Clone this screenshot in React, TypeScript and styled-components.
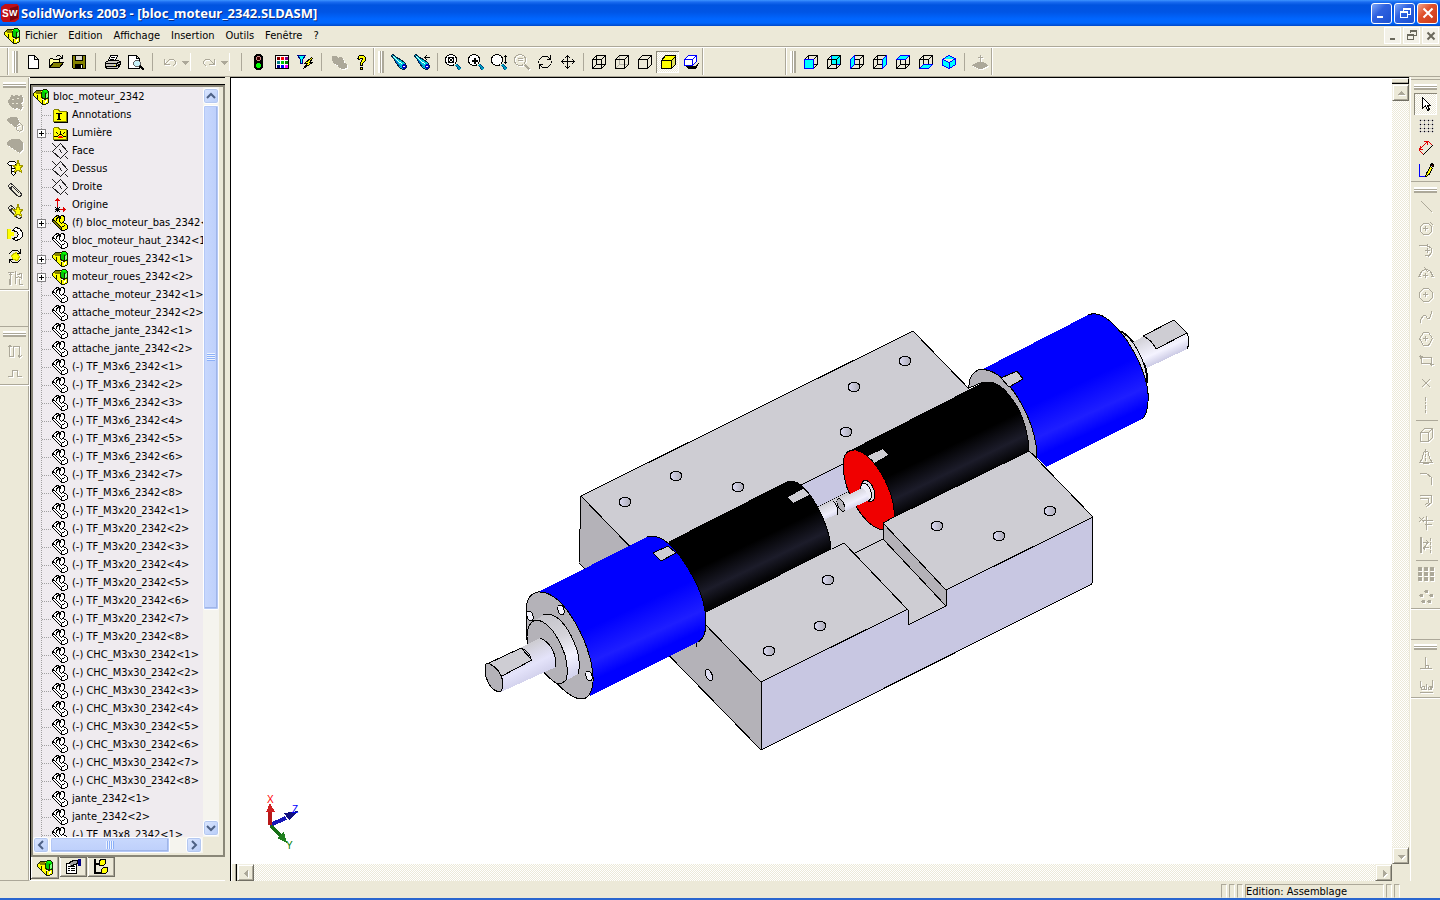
import React from 'react';
import styled, { createGlobalStyle, css } from 'styled-components';

const FACE = '#ece9d8';
const SHADOW = '#aca899';
const UI_FONT = '"DejaVu Sans Condensed", "DejaVu Sans", sans-serif';

const GlobalStyle = createGlobalStyle`
  * { box-sizing: border-box; }
  body { margin: 0; background: ${FACE}; font: 11px/14px ${UI_FONT}; color: #000; }
  button { font: inherit; color: inherit; border: 0; padding: 0; margin: 0; background: none; }
  ul { list-style: none; margin: 0; padding: 0; }
`;

const dither = (a: string, b: string) =>
  `repeating-conic-gradient(${a} 0 25%, ${b} 0 50%) 0 0 / 2px 2px`;

/* ---------- frame ---------- */

const Shell = styled.div`
  display: flex;
  flex-direction: column;
  height: 100vh;
  overflow: hidden;
  border-bottom: 2px solid #2a66cf;
`;

const TitleBar = styled.header`
  display: flex;
  align-items: center;
  flex: none;
  height: 26px;
  padding: 0 2px 0 1px;
  background: linear-gradient(#3d95ff 0, #1a6cf0 2px, #0054e0 5px, #0055e5 12px, #0066ff 19px, #0066fc 23px, #0048c8 26px);
`;

const Title = styled.h1`
  flex: 1;
  margin: 0 0 0 2px;
  font: bold 13px/18px "Noto Sans", "Open Sans", sans-serif;
  color: #fff;
  text-shadow: 1px 1px 0 #0a2a80;
  white-space: nowrap;
`;

const WindowButtons = styled.div`
  display: flex;
  gap: 2px;
`;

const WindowButton = styled.button<{ $close?: boolean }>`
  display: grid;
  place-items: center;
  width: 21px;
  height: 21px;
  border: 1px solid #fff;
  border-radius: 3px;
  background: ${p => p.$close
    ? 'linear-gradient(135deg, #f0a48c, #e0512b 40%, #c8381a)'
    : 'linear-gradient(135deg, #7fa8f8, #2f62e0 40%, #1b50d0)'};
`;

const MenuBar = styled.nav`
  display: flex;
  align-items: center;
  flex: none;
  height: 22px;
  padding: 0 1px 2px 4px;
  border-bottom: 1px solid #fff;
  box-shadow: inset 0 -1px 0 ${SHADOW};
`;

const MenuItems = styled.div`
  display: flex;
  flex: 1;
  gap: 11px;
  padding-left: 5px;
`;

const MdiButtons = styled.div`
  display: flex;
  gap: 2px;
`;

const MdiButton = styled.button`
  display: grid;
  place-items: center;
  width: 17px;
  height: 17px;
  border: 1px solid #fff;
  background: #f3f1e8;
`;

/* ---------- toolbars ---------- */

const TopBar = styled.div`
  display: flex;
  flex: none;
  height: 29px;
  padding: 0 0 1px 7px;
  border-bottom: 1px solid ${SHADOW};
`;

const Band = styled.div`
  display: flex;
  align-items: center;
  height: 27px;
  padding-left: 4px;
  border-left: 1px solid ${SHADOW};
  box-shadow: inset 1px 0 0 #fff;
`;

const BandGap = styled.div<{ $grow?: boolean }>`
  width: 83px;
  flex: ${p => (p.$grow ? '1' : 'none')};
  border-left: 1px solid ${SHADOW};
  box-shadow: inset 1px 0 0 #fff;
`;

const Grip = styled.div<{ $across?: boolean }>`
  flex: none;
  ${p => p.$across
    ? css`height: 6px; width: 23px; margin: 4px 0 3px 3px; border-top: 2px solid #fff; border-bottom: 2px solid ${SHADOW};
        background: linear-gradient(${SHADOW} 1px, #fff 1px);`
    : css`width: 6px; height: 22px; margin-right: 3px; border-left: 2px solid #fff; border-right: 2px solid ${SHADOW};
        background: linear-gradient(90deg, ${SHADOW} 1px, #fff 1px);`}
`;

const Divider = styled.div<{ $gap: number }>`
  flex: none;
  width: ${p => p.$gap}px;
  height: 18px;
  background: linear-gradient(${SHADOW}, ${SHADOW}) center / 1px 100% no-repeat;
`;

const Rule = styled.div`
  height: 8px;
  margin: 0 2px 0 5px;
  background: linear-gradient(${SHADOW}, ${SHADOW}) center / 100% 1px no-repeat;
`;

const ToolButton = styled.button<{ $pressed?: boolean; $off?: boolean }>`
  display: grid;
  place-items: center;
  flex: none;
  width: 23px;
  height: 22px;
  ${p => p.$pressed && css`
    background: ${dither('#fff', FACE)};
    box-shadow: inset 1px 1px 0 #8a8778, inset -1px -1px 0 #fff;
  `}
  ${p => p.$off && css`svg { filter: drop-shadow(1px 1px 0 #fff); }`}
`;

const SplitTool = styled.div`
  display: flex;
  align-items: center;
  justify-content: flex-end;
  width: 33px;
  height: 18px;
  margin-right: 6px;
  padding-right: 2px;
  border-right: 1px solid #fff;
`;

const DropButton = styled.button`
  display: grid;
  place-items: center;
  width: 7px;
  height: 18px;
`;

const Workspace = styled.div`
  display: grid;
  grid-template-columns: 30px 200px minmax(0, 1fr) 30px;
  grid-template-rows: minmax(0, 1fr);
  flex: 1;
  min-height: 0;
`;

const SideBar = styled.aside<{ $right?: boolean }>`
  ${p => p.$right
    ? css`padding-top: 2px; border-left: 1px solid #fff;`
    : css`border-right: 1px solid #fff; box-shadow: inset -1px 0 0 ${SHADOW}; border-bottom: 1px solid ${SHADOW};`}
`;

const SideBand = styled.div<{ $ruled?: boolean }>`
  display: flow-root;
  border-top: 1px solid ${p => (p.$ruled ? SHADOW : FACE)};
  border-bottom: 1px solid ${SHADOW};
  box-shadow: 0 1px 0 #fff;
  button { margin-left: 3px; }
`;

const SideSpace = styled.div<{ $size: number }>`
  height: ${p => p.$size}px;
`;

/* ---------- feature tree ---------- */

const TreePane = styled.section`
  display: flex;
  flex-direction: column;
  min-height: 0;
  width: 195px;
  padding-top: 6px;
  border-top: 1px solid #000;
  border-bottom: 1px solid #fff;
`;

const TreeFrame = styled.div`
  flex: 1;
  min-height: 0;
  border: solid #000;
  border-width: 1px 0 0 1px;
`;

const TreeInner = styled.div`
  display: grid;
  grid-template-columns: 170px 16px;
  grid-template-rows: minmax(0, 1fr) 16px;
  height: 100%;
  padding: 0 0 2px;
  border: 2px solid #8a8778;
`;

const Tree = styled.ul`
  overflow: hidden;
  padding-top: 1px;
  background: #efebef;
`;

const TreeRow = styled.li<{ $root?: boolean }>`
  display: flex;
  align-items: center;
  height: 18px;
  gap: 4px;
  white-space: nowrap;
  padding-left: ${p => (p.$root ? 0 : 3)}px;
  ${p => !p.$root && css`
    background: repeating-linear-gradient(#a0a0a0 0 1px, transparent 1px 2px) 8px 0 / 1px 18px no-repeat;
  `}
  svg { flex: none; }
`;

const Branch = styled.span`
  display: flex;
  align-items: center;
  flex: none;
  width: 16px;
  height: 18px;
  margin-right: -4px;
  padding-left: 1px;
  background: repeating-linear-gradient(90deg, #a0a0a0 0 1px, transparent 1px 2px) 6px 9px / 10px 1px no-repeat;
`;

const Expander = styled.button`
  width: 9px;
  height: 9px;
  border: 1px solid #848284;
  background:
    linear-gradient(#000, #000) center / 5px 1px no-repeat,
    linear-gradient(#000, #000) center / 1px 5px no-repeat,
    #fff;
`;

const LunaTrack = styled.div<{ $across?: boolean }>`
  display: flex;
  flex-direction: ${p => (p.$across ? 'row' : 'column')};
  gap: 1px;
  background: #f5f4ee;
  min-height: 0;
  ${p => p.$across ? css`padding-right: 1px;` : css`padding: 1px 0;`}
`;

const LunaButton = styled.button`
  display: grid;
  place-items: center;
  flex: none;
  width: 16px;
  height: 16px;
  border: 1px solid #fff;
  border-radius: 3px;
  background: linear-gradient(135deg, #dce7ff, #b7ccf8);
  box-shadow: inset 0 0 0 1px #b4c8f0;
`;

const LunaThumb = styled.div<{ $across?: boolean; $size: string }>`
  display: grid;
  place-items: center;
  flex: 0 0 ${p => p.$size};
  border: 1px solid #fff;
  border-radius: 2px;
  box-shadow: inset 0 0 0 1px #b4c8f6, inset -1px -1px 0 1px #9fb5e8;
  background: linear-gradient(${p => (p.$across ? '180deg' : '90deg')}, #c8d8fd, #bdcffb);
`;

const LunaGrip = styled.span<{ $across?: boolean }>`
  width: 8px;
  height: 8px;
  background: repeating-linear-gradient(${p => (p.$across ? '90deg' : '180deg')}, #eef4fe 0 1px, #8cb0f8 1px 2px);
`;

const TrackFill = styled.div`
  flex: 1;
`;

const Tabs = styled.div`
  display: flex;
  align-items: flex-start;
  flex: none;
  height: 23px;
  gap: 1px;
  border-left: 1px solid #000;
`;

const Tab = styled.button<{ $active?: boolean }>`
  display: grid;
  place-items: center;
  width: ${p => (p.$active ? 28 : 27)}px;
  height: ${p => (p.$active ? 22 : 20)}px;
  border: solid #716f64;
  border-width: ${p => (p.$active ? '0' : '1px')} 1px 1px 0;
  box-shadow: inset 1px 0 0 #fff, inset -1px -1px 0 ${SHADOW};
`;

/* ---------- graphics area ---------- */

const View = styled.main`
  display: grid;
  grid-template-columns: minmax(0, 1fr) 17px;
  grid-template-rows: minmax(0, 1fr) 17px;
  min-height: 0;
  margin-right: 1px;
  border: solid #000;
  border-width: 1px 0 0 1px;
`;

const Scene = styled.div`
  min-width: 0;
  min-height: 0;
  overflow: hidden;
  background: #fff;
  svg { display: block; width: 100%; height: 100%; }
`;

const ClassicTrack = styled.div<{ $across?: boolean }>`
  display: flex;
  flex-direction: ${p => (p.$across ? 'row' : 'column')};
  justify-content: space-between;
  background: ${dither('#fff', FACE)};
`;

const ClassicEnd = styled.div<{ $across?: boolean }>`
  display: flex;
  flex-direction: ${p => (p.$across ? 'row' : 'column')};
`;

const Splitter = styled.div<{ $across?: boolean }>`
  background: ${FACE};
  ${p => p.$across
    ? css`width: 6px; border: solid; border-width: 0 1px 0 1px; border-color: #fff #000 #fff #fff; box-shadow: inset -1px 0 0 ${SHADOW};`
    : css`height: 6px; border: solid; border-width: 1px 1px 1px 0; border-color: #fff #000 #000 #fff; box-shadow: inset 0 -1px 0 ${SHADOW};`}
`;

const ClassicButton = styled.button`
  display: grid;
  place-items: center;
  width: 17px;
  height: 17px;
  background: ${FACE};
  border: 1px solid;
  border-color: #f1efe2 #716f64 #716f64 #f1efe2;
  box-shadow: inset 1px 1px 0 #fff, inset -1px -1px 0 ${SHADOW};
  svg { filter: drop-shadow(1px 1px 0 #fff); }
`;

const StatusBar = styled.footer`
  display: flex;
  justify-content: flex-end;
  flex: none;
  gap: 2px;
  height: 17px;
  padding: 3px 40px 0 0;
`;

const Cell = styled.div<{ $wide?: boolean }>`
  width: ${p => (p.$wide ? 139 : 6)}px;
  height: 14px;
  border: 1px solid;
  border-color: ${SHADOW} #fff transparent ${SHADOW};
  white-space: nowrap;
`;

/* ---------- icons: a 16 x 16 grid, whole numbers fall on pixel centres ---------- */

const Icon = ({ children, size = 16 }: { children: React.ReactNode; size?: number }) => (
  <svg width={size} height={size} viewBox={`-0.5 -0.5 ${size} ${size}`} shapeRendering="crispEdges" aria-hidden="true">
    {children}
  </svg>
);

const L = ({ d, c = '#000', f = 'none', w = 1 }: { d: string; c?: string; f?: string; w?: number }) => (
  <path d={d} stroke={c} fill={f} strokeWidth={w} strokeLinecap="square" />
);

const G = SHADOW;
const CY = '#00ffff';
const BL = '#0000ff';

const asm = (
  <>
    <L d="M0 4L4 1H8L9 14H8L0 6Z" c="none" f="#ffff00" />
    <L d="M1 3L4 1H7L7 4L4 5Z" c="none" f="#848200" />
    <L d="M8 11L15 8V13L12 15H9Z" c="none" f="#ffff00" />
    <L d="M8 3L10 0H13L15 2V8L12 10L8 8Z" c="none" f="#00c800" />
    <L d="M10 1H13M11 2H13" c="#00ff00" />
    <L d="M13 5V8M14 4V7" c="#84ff84" />
    <L d="M12 12V13M13 11V12" c="#ffffff" />
    <L d="M0 4L3 1H7L9 1L10 0H13L15 2V13L12 15H9L0 6ZM4 6V9M8 3V8L12 10L15 8M12 4V9M9 11V14" c="#182000" />
  </>
);

const partShape = (fill: string, face: string) => (
  <>
    <L d="M0 4L3 1L5 0H6L7 2L9 0H11L12 2V5L10 7L13 8L15 10V13L12 15H9L0 6Z" f={fill} />
    <L d="M0 4L2 5L9 12V15L0 6Z" f={face} />
    <L d="M9 12L12 10M4 5V3L6 2M8 2L7 4V6L9 8" />
  </>
);

const cubeBack = (c = '#000') => <L d="M5 1H14V10M5 1V10H14M1 14L5 10" c={c} />;
const cubeFront = (c = '#000') => <L d="M1 5H10V14H1ZM1 5L5 1H14V10L10 14M10 5L14 1" c={c} />;

const lens = (c = '#000', f = '#fff', h = '#00a0c0') => (
  <>
    <L d="M4 0H7L10 2L11 4V7L9 10L7 11H4L1 9L0 7V4L1 2Z" c={c} f={f} />
    <L d="M11 11L14 14" c={h} w={2} />
    {c === '#000' && <L d="M11 12L13 15M12 10L15 13" c="#004080" />}
  </>
);

const torch = (
  <>
    <L d="M0 1L1 0L3 1L5 3L9 5L13 8L15 11V13L13 15H11L8 13L5 9L3 5L1 3Z" c="#002040" f="#00c8d8" />
    <L d="M2 2L4 4L7 7L10 9" c="#e0ffff" />
    <L d="M4 6L7 10L9 12" c="#0060c8" />
    <L d="M12 10L14 11V13L12 14L11 12Z" c="#0000c0" f="#fff" />
  </>
);

const folder = (
  <>
    <L d="M1 14V3L2 2H6L7 4H14V14Z" c="#848200" f="#ffff00" />
    <L d="M15 5V15H2" />
  </>
);
const clip = <L d="M1 3L3 1L5 2L13 10L14 12L13 14H11L4 7L3 5L5 4L11 10M1 3L2 6L9 13" c="#303030" />;
const star = <path d="M10.500 0L12 4.500H16L13 7.500L14 12L10.500 9.500L7 12L8 7.500L5 4.500H9Z" fill="#ffff00" stroke="#a09800" strokeWidth="1" />;

const icons: Record<string, React.ReactNode> = {
  asm,
  part: partShape('#fff', '#fff'),
  fixedPart: partShape('#ffff00', '#848200'),
  notes: (
    <>
      {folder}
      <L d="M4 6H9M6 6V12M7 6V12M5 12H8" />
    </>
  ),
  light: (
    <>
      {folder}
      <L d="M4 7L5 8M8 6V8M12 7L11 8M2 11H4M12 11H13M5 11L7 9H9L11 11" />
      <L d="M6 12H10M7 11H9" c="#ff0000" />
    </>
  ),
  plane: <L d="M8 0L15 8L8 15L0 8ZM0 0L3 3M13 13L15 15M7 6L9 9" c="#212021" />,
  origin: (
    <>
      <L d="M5 11V1M3 3H7M4 2H6M7 12H13M11 10V14M12 11V13" c="#e00000" />
      <L d="M3 12H7M5 10V14M3 10L7 14M7 10L3 14" />
    </>
  ),
  new: <L d="M3 1H9L13 5V14H3ZM9 1V5H13" f="#fff" />,
  open: (
    <>
      <L d="M1 13V5L2 4H4L5 5H11V8" f="#ffff9c" />
      <L d="M1 13L5 8H15L11 13Z" f="#848200" />
      <L d="M8 2L9 1H11L13 3M14 1V4H11" />
    </>
  ),
  save: (
    <>
      <L d="M1 1H14V14H2L1 13Z" f="#848200" />
      <L d="M4 1H11V6H4Z" f="#dedbce" />
      <L d="M4 10H11V14H4Z" f="#000" />
      <L d="M10 11V13" c="#fff" />
    </>
  ),
  print: (
    <>
      <L d="M5 1H12L10 6H3Z" f="#fff" />
      <L d="M6 3H9M5 5H8" />
      <L d="M0 8L3 6H12L15 7V10L12 14H1L0 12Z" f="#c6c3bd" />
      <L d="M0 9H11L15 7M0 12H11V9M11 12L15 9" />
      <L d="M9 11H9" c="#ffff00" />
    </>
  ),
  preview: (
    <>
      <L d="M0 1H8L11 4V14H0ZM8 1V4H11" f="#fff" />
      <L d="M7 6H10L12 8V10L10 12H7L5 10V8Z" f="#c6f0f8" c="#606060" />
      <L d="M12 12L15 15" w={2} />
    </>
  ),
  undo: <L d="M2 5V10H7M3 9L7 5H11L13 7V9L11 11" c={G} />,
  redo: <L d="M13 5V10H8M12 9L8 5H4L2 7V9L4 11" c={G} />,
  lights: (
    <>
      <L d="M5 0H9L11 2V13L9 15H5L3 13V2Z" f="#000" />
      <L d="M6 2H8L9 3V5L8 6H6L5 5V3Z" c="#d09090" f="#400000" />
      <L d="M6 9H8L9 10V12L8 13H6L5 12V10Z" c="#00ff00" f="#00ff00" />
    </>
  ),
  palette: (
    <>
      <L d="M1 1H14V14H1Z" f="#fff" />
      {['#840000', '#ff0000', '#840084', '#008284', '#00c800', '#008200', '#000084', '#0000ff', '#ff00ff'].map((c, i) => (
        <rect key={i} x={2.5 + (i % 3) * 4} y={2.5 + Math.floor(i / 3) * 4} width="3" height="3" fill={c} />
      ))}
    </>
  ),
  filter: (
    <>
      <L d="M0 1H8L5 5V9H3V5Z" c="#000084" f={CY} />
      <L d="M14 3L7 9H10L6 14L15 8H12L15 4Z" c="#000" f="#ffff00" />
    </>
  ),
  cloud: <L d="M1 2H5L6 4L10 3L12 6V8L15 10V13L12 14L8 13L6 10L3 9L1 6Z" c={G} f={G} />,
  help: (
    <>
      <L d="M3 4L5 1H9L11 3V6L8 9V11H6V8L8 5V4H6L5 5Z" f="#ffff00" />
      <L d="M6 13H8V15H6Z" f="#ffff00" />
    </>
  ),
  torch,
  torchBack: <>{torch}<L d="M10 3H15M12 1L10 3L12 5" /></>,
  zoomFit: <>{lens()}<L d="M3 3H8V8H3ZM4 4L7 7M7 4L4 7" /></>,
  zoomIn: <>{lens()}<path d="M3 5H9V7H3ZM5 3H7V9H5Z" /></>,
  zoomDrag: <>{lens()}<L d="M14 1V9M13 2H15M13 8H15" /></>,
  zoomSel: <>{lens(G, 'none', G)}<L d="M4 4H8M4 6H8" c={G} /></>,
  rotate: <L d="M2 5L5 2H10L13 5M13 1V5H10M13 10L10 13H5L2 10M2 14V10H5M1 7V8M14 7V8" />,
  pan: <L d="M7 1V14M1 7H14M5 3L7 1L9 3M5 12L7 14L9 12M3 5L1 7L3 9M12 5L14 7L12 9" />,
  wire: <>{cubeBack()}{cubeFront()}</>,
  hiddenGray: <>{cubeBack('#b4b2a8')}{cubeFront()}</>,
  hidden: cubeFront(),
  shaded: (
    <>
      <L d="M1 6L5 1H15V10L11 14H1Z" f="#ffff00" />
      <L d="M11 6L15 2V10L11 14Z" f="#e0e060" />
      <L d="M1 6H11V14" />
    </>
  ),
  shadow: (
    <>
      <L d="M3 12H12L15 9L12 14H5Z" f="#000" />
      <L d="M1 5L5 1H13V7L9 11H1ZM1 5H9V11M9 5L13 1" c={BL} f="#fff" />
    </>
  ),
  vFront: <>{cubeBack()}{cubeFront()}<L d="M1 5H10V14H1Z" c={BL} f={CY} /></>,
  vBack: <><L d="M5 1H14V10H5Z" c={BL} f={CY} />{cubeFront()}<L d="M5 5V10H10M1 14L5 10" /></>,
  vLeft: <>{cubeBack()}{cubeFront()}<L d="M1 5L5 1V10L1 14Z" c={BL} f={CY} /></>,
  vRight: <>{cubeBack()}{cubeFront()}<L d="M10 5L14 1V10L10 14Z" c={BL} f={CY} /></>,
  vTop: <>{cubeBack()}{cubeFront()}<L d="M1 5L5 1H14L10 5Z" c={BL} f={CY} /></>,
  vBottom: <>{cubeBack()}{cubeFront()}<L d="M1 14L5 10H14L10 14Z" c={BL} f={CY} /></>,
  vIso: <L d="M1 5L7 1L14 4V10L8 14L1 11ZM1 5L8 8L14 4M8 8V14" c={BL} f={CY} />,
  normal: <><L d="M8 1V8M6 3H10" c={G} /><L d="M0 11L5 8H11L15 11L9 14H7Z" c={G} f={G} /></>,
  select: <L d="M4 1V12L7 9L9 14L11 13L9 9H12Z" f="#fff" />,
  grid: (
    <>
      <L d="M2 1V14M6 1V14M10 1V14M14 1V14M1 2H15M1 6H15M1 10H15M1 13H15" c="#c6c3c6" />
      {[2, 6, 10, 14].map(x => [2, 6, 10, 13].map(y => <rect key={`${x}-${y}`} x={x - 0.5} y={y - 0.5} width="1" height="1" />))}
    </>
  ),
  dimension: (
    <>
      <L d="M1 9L9 1M2 6L1 9H4M6 1H9V4" c="#e00000" />
      <L d="M1 10L5 14M10 1L14 5" c="#e00000" />
      <L d="M5 14L14 5" />
    </>
  ),
  sketch: (
    <>
      <L d="M1 2V14H7" c={BL} />
      <L d="M8 11L7 14L10 13L14 6L12 4Z" f="#ffff00" />
      <L d="M12 3L13 1L15 2V4Z" f="#840000" />
    </>
  ),
  line: <L d="M3 2L13 12" c={G} />,
  arcCenter: <L d="M5 2H10L13 5V10L10 13H5L2 10V5ZM5 7H9M7 5V9M12 1L14 3" c={G} />,
  arcTangent: <L d="M1 2H9L13 5V9L10 13M7 7H11M9 5V9M7 12H10M9 1V3" c={G} />,
  arc3: <L d="M1 10L3 6L6 4H9L12 6L14 10M7 8V12M5 10H9M6 2L9 6M0 11H2M13 11H15" c={G} />,
  circle: <L d="M5 1H10L14 5V10L10 14H5L1 10V5ZM5 7H9M7 5V9" c={G} />,
  spline: <L d="M2 13V10L5 6H7L9 9H11L13 3V2" c={G} />,
  polygon: <L d="M5 1H10L14 7L10 14H5L1 7ZM5 7H9M7 5V9" c={G} />,
  rect: <L d="M3 4H13V10H3ZM1 3H4M2 2V5M12 11H15M13 9V12" c={G} />,
  point: <L d="M4 4L11 11M11 4L4 11" c={G} />,
  centerline: <L d="M7 0V3M7 5V6M7 8V11M7 13V15" c={G} />,
  convert: <L d="M2 5H10V14H2ZM2 5L6 1H14V10L10 14M10 5L14 1" c={G} />,
  mirror: <L d="M7 0V3M7 5V7M7 9V11M5 3L4 9L1 13H14L11 9L10 3L7 1L5 3M5 14H10" c={G} />,
  fillet: <L d="M2 2H8L13 6V13" c={G} />,
  offset: <L d="M2 2H13V9L8 13M2 5H10V9L7 11" c={G} />,
  trim: <L d="M1 2L5 6M5 2L1 6M4 5H14M8 1V14M7 9H13" c={G} />,
  symmetry: (
    <>
      <L d="M2 0V15" c={G} w={2} />
      <L d="M12 1V3M12 5V7M12 9V11M12 13V15M5 5H9L6 10M8 3L10 5L8 7M6 10H10M6 12L5 10L7 8" c={G} />
    </>
  ),
  linPattern: (
    <>{[0, 1, 2].map(r => [0, 1, 2].map(c => <rect key={`${r}${c}`} x={c * 6 - 0.5} y={r * 5 - 0.5} width="4" height="4" fill={G} />))}</>
  ),
  circPattern: (
    <>{[[8, 2], [3, 6], [13, 6], [5, 12], [11, 12]].map(([x, y]) => <circle key={`${x}${y}`} cx={x} cy={y} r="2" fill={G} />)}</>
  ),
  perpendicular: <L d="M2 12H13M7 1V12M7 9H10V12" c={G} />,
  relations: <L d="M2 3V9L4 11H6V8H4M8 6V11H6M10 9V11H13V8H11M14 2V9M2 14H14M3 9V11M12 9V11" c={G} />,
  hideShow: (
    <>
      <L d="M1 6L3 4L4 1L7 2L9 1L12 2L14 1L15 4V7L13 9L15 12L13 15L10 13L7 14L2 10Z" c={G} f={G} />
      <L d="M5 5H6M10 4H11M9 9H10M5 9H6" c={FACE} />
    </>
  ),
  suppress: (
    <>
      <L d="M0 3L3 1H9L11 4V7L8 10L6 9L0 4Z" c={G} f={G} />
      <L d="M10 7L12 6L15 9V13L12 15L9 13V10L12 9" c={G} />
    </>
  ),
  editPart: <L d="M0 4L4 1H12L15 4V11L12 14L9 12L0 6Z" c={G} f={G} />,
  addPart: (
    <>
      <L d="M0 3L2 1H7L9 3L7 5H2ZM4 5V13L6 15L8 13V6M4 8H8M4 11H8" f="#fff" />
      {star}
    </>
  ),
  clip,
  clipStar: <>{clip}{star}</>,
  rotatePart: (
    <>
      <L d="M5 4L8 1L12 2L15 6V10L12 13L8 14L5 12L9 11L11 8L9 5Z" f="#fff" />
      <path d="M0 2H3V5H6V9H3V12H0Z" fill="#ffff00" />
      <L d="M0 3V12" c="#c8c800" />
    </>
  ),
  motion: (
    <>
      <L d="M5 6L9 4L12 8L10 12L6 11L4 8Z" c="#c8c800" f="#ffff00" />
      <L d="M2 5L5 2H10L13 5M13 1V5H10M13 11L10 14H5L2 11M2 14V11H5" />
    </>
  ),
  exploded: <L d="M1 2H6M3 2V8M2 4H4M2 9V14M3 9V14M8 1V8L11 6L14 8V3L10 4M8 9V13M12 9V14H15" c={G} />,
  wave: <L d="M2 2V13H6V3H12V13M1 3L2 2L4 3M11 12L12 14L14 12" c={G} />,
  step: <L d="M1 11H5V5H10V11H14" c={G} />,
  props: (
    <>
      <L d="M1 4H11V14H1Z" f="#fff" />
      <L d="M3 7H4M6 7H9M3 9H4M6 9H9M3 11H4M6 11H9" />
      <L d="M4 3L8 1H12V4L9 5L5 7" f="#a0a0a0" />
      <L d="M14 0V5" c="#000084" w={3} />
    </>
  ),
  config: (
    <>
      <L d="M1 0V13H6M1 4H6" w={2} />
      <L d="M6 1L8 0H12V4L10 6H6Z" f="#ffff00" />
      <L d="M8 10L10 8H14V12L12 14H8Z" f="#ffff00" />
    </>
  ),
};

const Glyph = ({ name }: { name: string }) => <Icon>{icons[name]}</Icon>;

const Arrow = ({ dir, c = G }: { dir: 'up' | 'down' | 'left' | 'right'; c?: string }) => {
  const d = { up: 'M4 2L7 5H1Z', down: 'M1 3H7L4 6Z', left: 'M2 4L5 1V7Z', right: 'M6 4L3 1V7Z' }[dir];
  return <Icon size={8}><path d={d} fill={c} stroke={c} /></Icon>;
};

const Chevron = ({ dir }: { dir: 'up' | 'down' | 'left' | 'right' }) => {
  const d = { up: 'M0 6L4 2L8 6', down: 'M0 2L4 6L8 2', left: 'M6 0L2 4L6 8', right: 'M2 0L6 4L2 8' }[dir];
  return (
    <svg width="10" height="10" viewBox="-1 -1 10 10" aria-hidden="true">
      <path d={d} fill="none" stroke="#4d6185" strokeWidth="2" />
    </svg>
  );
};

type Tool = [icon: string, label: string, state?: 'pressed' | 'off'];

const ToolSet = ({ tools }: { tools: Tool[] }) => (
  <>
    {tools.map(([icon, label, state]) => (
      <ToolButton key={label} aria-label={label} $pressed={state === 'pressed'} $off={state === 'off'}>
        <Glyph name={icon} />
      </ToolButton>
    ))}
  </>
);

const Split = ({ icon, label }: { icon: string; label: string }) => (
  <SplitTool>
    <ToolButton aria-label={label} $off><Glyph name={icon} /></ToolButton>
    <DropButton aria-label={`${label} (liste)`}><Arrow dir="down" /></DropButton>
  </SplitTool>
);

/* ---------- tree data ---------- */

type Node = { icon: string; label: string; open?: boolean };

const series = (name: string, n: number): Node[] =>
  Array.from({ length: n }, (_, i) => ({ icon: 'part', label: `${name}<${i + 1}>` }));

const nodes: Node[] = [
  { icon: 'notes', label: 'Annotations' },
  { icon: 'light', label: 'Lumière', open: true },
  { icon: 'plane', label: 'Face' },
  { icon: 'plane', label: 'Dessus' },
  { icon: 'plane', label: 'Droite' },
  { icon: 'origin', label: 'Origine' },
  { icon: 'fixedPart', label: '(f) bloc_moteur_bas_2342<1>', open: true },
  { icon: 'part', label: 'bloc_moteur_haut_2342<1>' },
  { icon: 'asm', label: 'moteur_roues_2342<1>', open: true },
  { icon: 'asm', label: 'moteur_roues_2342<2>', open: true },
  ...series('attache_moteur_2342', 2),
  ...series('attache_jante_2342', 2),
  ...series('(-) TF_M3x6_2342', 8),
  ...series('(-) TF_M3x20_2342', 8),
  ...series('(-) CHC_M3x30_2342', 8),
  ...series('jante_2342', 2),
  ...series('(-) TF_M3x8_2342', 1),
];

/* ---------- 3D model ---------- */

const TOP = '#cecdd3';
const SIDE = '#b4b2b8';
const FRONT = '#c8c7e2';

const holes = [
  [905, 361], [854, 387], [846, 432], [937, 526], [999, 536], [1050, 511], [828, 580],
  [820, 626], [769, 651], [625, 502], [676, 476], [738, 487],
];

const Model = () => (
  <svg viewBox="231 78 1161 786" role="img" aria-label="Assemblage bloc_moteur_2342" shapeRendering="crispEdges">
    <defs>
      <linearGradient id="blackR" gradientUnits="userSpaceOnUse" x1="853" y1="450" x2="887" y2="520">
        <stop offset=".5" stopColor="#000" /><stop offset=".8" stopColor="#1c1c2a" /><stop offset="1" stopColor="#040406" />
      </linearGradient>
      <linearGradient id="blackL" gradientUnits="userSpaceOnUse" x1="787" y1="482" x2="821" y2="552">
        <stop offset=".5" stopColor="#000" /><stop offset=".8" stopColor="#1c1c2a" /><stop offset="1" stopColor="#040406" />
      </linearGradient>
      <linearGradient id="blueR" gradientUnits="userSpaceOnUse" x1="1088" y1="315" x2="1137" y2="421">
        <stop offset=".5" stopColor="#00f" /><stop offset=".77" stopColor="#1e1eff" /><stop offset=".92" stopColor="#00f" />
      </linearGradient>
      <linearGradient id="blueL" gradientUnits="userSpaceOnUse" x1="647" y1="537" x2="696" y2="643">
        <stop offset=".5" stopColor="#00f" /><stop offset=".77" stopColor="#1e1eff" /><stop offset=".92" stopColor="#00f" />
      </linearGradient>
      <linearGradient id="shaftL" gradientUnits="userSpaceOnUse" x1="520" y1="649" x2="534" y2="678">
        <stop offset="0" stopColor="#cecdd3" /><stop offset=".6" stopColor="#e4e3fa" /><stop offset="1" stopColor="#d2d1ec" />
      </linearGradient>
      <linearGradient id="shaftR" gradientUnits="userSpaceOnUse" x1="1150" y1="332" x2="1164" y2="362">
        <stop offset="0" stopColor="#cecdd3" /><stop offset=".65" stopColor="#f4f3ff" /><stop offset="1" stopColor="#c4c3e0" />
      </linearGradient>
      <linearGradient id="shaftM" gradientUnits="userSpaceOnUse" x1="850" y1="491" x2="858" y2="508">
        <stop offset="0" stopColor="#cecdd3" /><stop offset=".6" stopColor="#f0effc" /><stop offset="1" stopColor="#c8c7e2" />
      </linearGradient>
      <linearGradient id="collar" gradientUnits="userSpaceOnUse" x1="548" y1="615" x2="575" y2="680">
        <stop offset="0" stopColor="#c6c5cb" /><stop offset=".35" stopColor="#d4d3d9" /><stop offset=".65" stopColor="#f4f3ff" /><stop offset="1" stopColor="#ccccea" />
      </linearGradient>
      <linearGradient id="hole"><stop offset="0" stopColor="#dddcf6" /><stop offset="1" stopColor="#aaa9b2" /></linearGradient>
    </defs>

    <g stroke="#000" strokeWidth="1" strokeLinejoin="round">
      <path d="M581 496L761 682V750L579 563Z" fill={SIDE} />
      <path d="M581 496L913 331L1093 517L761 682Z" fill={TOP} />
      <path d="M761 682L1093 517L1092 584L761 750Z" fill={FRONT} />
      {holes.map(([x, y]) => <ellipse key={`${x}-${y}`} cx={x} cy={y} rx="6" ry="4.5" fill="url(#hole)" />)}
      <ellipse cx="709" cy="675" rx="3" ry="6" transform="rotate(-25 709 675)" fill="#dddcf0" />
      <path d="M696 641V647" />

      <path d="M801 485L843 464L856 488L818 507Z" fill={FRONT} />
      <path d="M818 507L850 491L895 517L883 523V539L855 553L844 543L832 549Z" fill={TOP} stroke="none" />
      <path d="M832 549L844 543M883 539L855 553" fill="none" />
      <path d="M844 543L855 553L883 539L946 606L908 625V610Z" fill={TOP} stroke="none" />
      <path d="M908 625V610L946 591V606Z" fill={TOP} stroke="none" />
      <path d="M855 553L883 539L946 606L908 625V610L844 543" fill="none" />
      <path d="M883 523L946 590V606L883 539Z" fill={SIDE} />

      <path d="M1118 330C1132 334 1148 360 1148 383L1140 372Z" fill="#dddce8" />
      <path d="M1133 342L1174 320C1184 326 1192 342 1187 349L1147 368Z" fill="url(#shaftR)" stroke="none" />
      <path d="M1143 336L1174 320L1187 333L1156 349Q1152 340 1143 336Z" fill={TOP} />
      <path d="M1187 333Q1191 342 1187 349" fill="none" />
      <path d="M1118 330C1132 336 1147 360 1147 383" fill="none" />

      <path d="M981 370L1088 315C1102 309 1116 326 1126 339C1140 360 1150 385 1148 402Q1147 416 1142 419L1046 467L1030 451Z" fill="url(#blueR)" stroke="none" />
      <path d="M1088 315C1102 309 1116 326 1126 339C1140 360 1150 385 1148 402Q1147 416 1142 419" fill="none" />
      <path d="M969 388Q968 375 978 370C994 367 1008 382 1018 398C1030 418 1037 438 1037 458L1029 451L983 382Z" fill={SIDE} />
      <path d="M1001 378L1017 371L1023 379L1009 387Z" fill={TOP} />

      <path d="M850 451L983 383C998 378 1010 395 1018 408Q1028 427 1029 451L894 517Z" fill="url(#blackR)" stroke="#000" />
      <path d="M868 456L883 449L888 455L874 463Z" fill={TOP} stroke="none" />
      <path d="M843 463Q844 449 856 450C872 454 885 477 891 495Q895 509 894 517L883 523V530C868 528 856 508 850 495Q843 480 843 463Z" fill="#f00000" />
      <ellipse cx="868" cy="491" rx="6" ry="11" transform="rotate(-20 868 491)" fill="#dddce4" />
      <ellipse cx="866" cy="492" rx="5" ry="9" transform="rotate(-20 866 492)" fill="#eeedf6" />
      <path d="M840 499L862 488Q868 492 869 500L846 511Z" fill="url(#shaftM)" stroke="none" />
      <path d="M816 509L835 501Q839 506 837 514L822 521Z" fill="url(#shaftM)" stroke="none" />
      <path d="M833 501Q838 505 838 515" fill="none" />
      <ellipse cx="841" cy="505" rx="3" ry="7" transform="rotate(-25 841 505)" fill={SIDE} />

      <path d="M669 542L787 482C800 478 810 494 817 506Q830 530 831 549L706 612Z" fill="url(#blackL)" />
      <path d="M788 497L803 489L809 495L793 503Z" fill={TOP} stroke="none" />

      <path d="M538 592L647 537C662 532 676 550 684 562C698 583 706 605 706 622Q706 638 698 642L590 696Z" fill="url(#blueL)" stroke="none" />
      <path d="M647 537C662 532 676 550 684 562C698 583 706 605 706 622Q706 638 698 642" fill="none" />
      <path d="M653 553L668 546L676 553L661 561Z" fill={TOP} />

      <path d="M526 612Q526 594 538 592C554 591 568 610 576 624C588 645 594 668 593 683Q591 699 581 699C570 698 558 686 550 674L527 640Z" fill={SIDE} />
      <ellipse cx="561" cy="610" rx="3" ry="5" transform="rotate(-20 561 610)" fill="#f4f3fc" />
      <ellipse cx="530" cy="616" rx="3" ry="5" transform="rotate(-20 530 616)" fill="#f4f3fc" />
      <ellipse cx="589" cy="676" rx="3" ry="5" transform="rotate(-20 589 676)" fill="#f4f3fc" />
      <path d="M534 621L544 615C560 610 572 635 577 650Q581 664 578 674L560 684Z" fill="url(#collar)" stroke="none" />
      <path d="M543 615C560 610 572 635 577 650Q581 664 578 674" fill="none" />
      <path d="M527 636Q528 620 538 620C552 624 560 641 565 655Q569 670 566 680Q560 687 553 681C536 667 526 650 527 636Z" fill={SIDE} />
      <path d="M488 664L540 638Q556 645 556 667L501 692Z" fill="url(#shaftL)" stroke="none" />
      <path d="M540 638Q556 645 556 667" fill="none" />
      <path d="M487 664L521 648L532 660L502 676Z" fill={TOP} />
      <path d="M521 648Q530 652 531 659" fill="none" />
      <path d="M485 667Q485 662 490 664Q501 670 503 682Q503 692 499 692Q490 690 486 677Z" fill={SIDE} />
    </g>

    <g strokeWidth="4" fill="none">
      <path d="M270 825L286 818" stroke="#1818b8" />
      <path d="M284 813L298 811L289 820Z" fill="#101080" />
      <path d="M271 826L281 836" stroke="#187018" />
      <path d="M284 832L287 843L277 838Z" fill="#208020" />
      <path d="M270 825V811" stroke="#b81818" />
      <path d="M270 803L275 812H266Z" fill="#d02020" />
    </g>
    <g fontFamily="Liberation Sans, sans-serif" fontSize="10">
      <text x="267" y="803" fill="#ff0000">X</text>
      <text x="292" y="813" fill="#0000ff">Z</text>
      <text x="286" y="849" fill="#008000">Y</text>
    </g>
  </svg>
);

export default function App() {
  return (
    <>
      <GlobalStyle />
      <Shell>
        <TitleBar>
          <svg width="18" height="18" viewBox="0 0 18 18" aria-hidden="true">
            <path d="M0 3L4 0H16L18 2V15L14 18H2L0 15Z" fill="#c01018" />
            <path d="M9 4L17 2V14L9 17Z" fill="#7a0810" />
            <text x="1" y="13" fontFamily="Liberation Sans, sans-serif" fontWeight="bold" fontSize="10" fill="#fff">S</text>
            <text x="8" y="12" fontFamily="Liberation Sans, sans-serif" fontWeight="bold" fontSize="9" fill="#fff">W</text>
          </svg>
          <Title>SolidWorks 2003 - [bloc_moteur_2342.SLDASM]</Title>
          <WindowButtons>
            <WindowButton aria-label="Réduire">
              <Icon><L d="M3 11H8M3 12H8" c="#fff" /></Icon>
            </WindowButton>
            <WindowButton aria-label="Restaurer">
              <Icon><L d="M6 5V3H13V9H11M6 4H13M3 6H10V12H3ZM3 7H10" c="#fff" /></Icon>
            </WindowButton>
            <WindowButton aria-label="Fermer" $close>
              <Icon><path d="M3 3L12 12M12 3L3 12" stroke="#fff" strokeWidth="2" shapeRendering="auto" /></Icon>
            </WindowButton>
          </WindowButtons>
        </TitleBar>

        <MenuBar>
          <Glyph name="asm" />
          <MenuItems>
            {['Fichier', 'Edition', 'Affichage', 'Insertion', 'Outils', 'Fenêtre', '?'].map(m => (
              <button key={m}>{m}</button>
            ))}
          </MenuItems>
          <MdiButtons>
            <MdiButton aria-label="Réduire le document">
              <Icon><L d="M5 10H9M5 11H9" c="#6a685c" /></Icon>
            </MdiButton>
            <MdiButton aria-label="Restaurer le document">
              <Icon><L d="M6 4V2H12V7H10M6 3H12M3 6H9V11H3ZM3 7H9" c="#6a685c" /></Icon>
            </MdiButton>
            <MdiButton aria-label="Fermer le document">
              <Icon><path d="M4 4L11 11M11 4L4 11" stroke="#6a685c" strokeWidth="2" shapeRendering="auto" /></Icon>
            </MdiButton>
          </MdiButtons>
        </MenuBar>

        <TopBar>
          <Band>
            <Grip />
            <ToolSet tools={[['new', 'Nouveau'], ['open', 'Ouvrir'], ['save', 'Enregistrer']]} />
            <Divider $gap={11} />
            <ToolSet tools={[['print', 'Imprimer'], ['preview', 'Aperçu avant impression']]} />
            <Divider $gap={11} />
            <Split icon="undo" label="Annuler" />
            <Split icon="redo" label="Rétablir" />
            <Divider $gap={11} />
            <ToolSet tools={[['lights', 'Reconstruire'], ['palette', 'Couleur'], ['filter', 'Filtres de sélection']]} />
            <Divider $gap={11} />
            <ToolSet tools={[['cloud', 'Macro', 'off'], ['help', 'Aide']]} />
          </Band>
          <Band>
            <Grip />
            <ToolSet tools={[['torch', 'Orientation de la vue'], ['torchBack', 'Vue précédente']]} />
            <Divider $gap={8} />
            <ToolSet
              tools={[
                ['zoomFit', 'Zoom au mieux'], ['zoomIn', 'Zoom fenêtre'], ['zoomDrag', 'Zoom avant/arrière'],
                ['zoomSel', 'Zoom sur la sélection', 'off'], ['rotate', 'Rotation'], ['pan', 'Translation'],
              ]}
            />
            <Divider $gap={8} />
            <ToolSet
              tools={[
                ['wire', 'Image filaire'], ['hiddenGray', 'Lignes cachées en gris'], ['hidden', 'Lignes cachées supprimées'],
                ['shaded', 'Image ombrée', 'pressed'], ['shadow', 'Ombres en mode image ombrée'],
              ]}
            />
          </Band>
          <BandGap />
          <Band>
            <Grip />
            <ToolSet
              tools={[
                ['vFront', 'Face'], ['vBack', 'Arrière'], ['vLeft', 'Gauche'], ['vRight', 'Droite'],
                ['vTop', 'Dessus'], ['vBottom', 'Dessous'], ['vIso', 'Isométrique'],
              ]}
            />
            <Divider $gap={8} />
            <ToolSet tools={[['normal', 'Normal à', 'off']]} />
          </Band>
          <BandGap $grow />
        </TopBar>

        <Workspace>
          <SideBar>
            <SideBand>
              <Grip $across />
              <ToolSet
                tools={[
                  ['hideShow', 'Cacher/Montrer', 'off'], ['suppress', 'Changer la suppression', 'off'],
                  ['editPart', 'Editer la pièce', 'off'], ['addPart', 'Insérer une pièce'], ['clip', 'Contrainte'],
                  ['clipStar', 'Contrainte intelligente'], ['rotatePart', 'Rotation du composant'],
                  ['motion', 'Déplacer le composant'], ['exploded', 'Vue éclatée', 'off'],
                ]}
              />
            </SideBand>
            <SideSpace $size={36} />
            <SideBand $ruled>
              <Grip $across />
              <ToolSet tools={[['wave', 'Esquisse avec lignes', 'off'], ['step', 'Ligne décalée', 'off']]} />
            </SideBand>
          </SideBar>

          <TreePane>
            <TreeFrame>
              <TreeInner>
                <Tree>
                  <TreeRow $root><Glyph name="asm" />bloc_moteur_2342</TreeRow>
                  {nodes.map(n => (
                    <TreeRow key={n.label}>
                      <Branch>{n.open && <Expander aria-label={`Développer ${n.label}`} />}</Branch>
                      <Glyph name={n.icon} />
                      {n.label}
                    </TreeRow>
                  ))}
                </Tree>
                <LunaTrack>
                  <LunaButton aria-label="Défiler vers le haut"><Chevron dir="up" /></LunaButton>
                  <LunaThumb $size="67.5%"><LunaGrip /></LunaThumb>
                  <TrackFill />
                  <LunaButton aria-label="Défiler vers le bas"><Chevron dir="down" /></LunaButton>
                </LunaTrack>
                <LunaTrack $across>
                  <LunaButton aria-label="Défiler à gauche"><Chevron dir="left" /></LunaButton>
                  <LunaThumb $across $size="71%"><LunaGrip $across /></LunaThumb>
                  <TrackFill />
                  <LunaButton aria-label="Défiler à droite"><Chevron dir="right" /></LunaButton>
                </LunaTrack>
              </TreeInner>
            </TreeFrame>
            <Tabs>
              <Tab $active aria-label="Arbre de création"><Glyph name="asm" /></Tab>
              <Tab aria-label="Propriétés"><Glyph name="props" /></Tab>
              <Tab aria-label="Configurations"><Glyph name="config" /></Tab>
            </Tabs>
          </TreePane>

          <View>
            <Scene><Model /></Scene>
            <ClassicTrack>
              <ClassicEnd>
                <Splitter />
                <ClassicButton aria-label="Vue vers le haut"><Arrow dir="up" /></ClassicButton>
              </ClassicEnd>
              <ClassicButton aria-label="Vue vers le bas"><Arrow dir="down" /></ClassicButton>
            </ClassicTrack>
            <ClassicTrack $across>
              <ClassicEnd $across>
                <Splitter $across />
                <ClassicButton aria-label="Vue à gauche"><Arrow dir="left" /></ClassicButton>
              </ClassicEnd>
              <ClassicButton aria-label="Vue à droite"><Arrow dir="right" /></ClassicButton>
            </ClassicTrack>
          </View>

          <SideBar $right>
            <SideBand $ruled>
              <Grip $across />
              <ToolSet
                tools={[['select', 'Sélectionner', 'pressed'], ['grid', 'Grille'], ['dimension', 'Cotation'], ['sketch', 'Esquisse']]}
              />
            </SideBand>
            <SideBand>
              <Grip $across />
              <ToolSet
                tools={[
                  ['line', 'Ligne', 'off'], ['arcCenter', 'Arc par son centre', 'off'], ['arcTangent', 'Arc tangent', 'off'],
                  ['arc3', 'Arc par 3 points', 'off'], ['circle', 'Cercle', 'off'], ['spline', 'Spline', 'off'],
                  ['polygon', 'Polygone', 'off'], ['rect', 'Rectangle', 'off'], ['point', 'Point', 'off'],
                  ['centerline', 'Ligne de construction', 'off'],
                ]}
              />
              <Rule />
              <ToolSet
                tools={[
                  ['convert', 'Convertir les entités', 'off'], ['mirror', 'Miroir', 'off'], ['fillet', 'Congé', 'off'],
                  ['offset', 'Décaler', 'off'], ['trim', 'Ajuster', 'off'], ['symmetry', 'Symétrie', 'off'],
                ]}
              />
              <Rule />
              <ToolSet tools={[['linPattern', 'Répétition linéaire', 'off'], ['circPattern', 'Répétition circulaire', 'off']]} />
            </SideBand>
            <SideSpace $size={30} />
            <SideBand $ruled>
              <Grip $across />
              <ToolSet tools={[['perpendicular', 'Ajouter des relations', 'off'], ['relations', 'Afficher les relations', 'off']]} />
            </SideBand>
          </SideBar>
        </Workspace>

        <StatusBar>
          <Cell /><Cell /><Cell />
          <Cell $wide>Edition: Assemblage</Cell>
          <Cell /><Cell />
        </StatusBar>
      </Shell>
    </>
  );
}
